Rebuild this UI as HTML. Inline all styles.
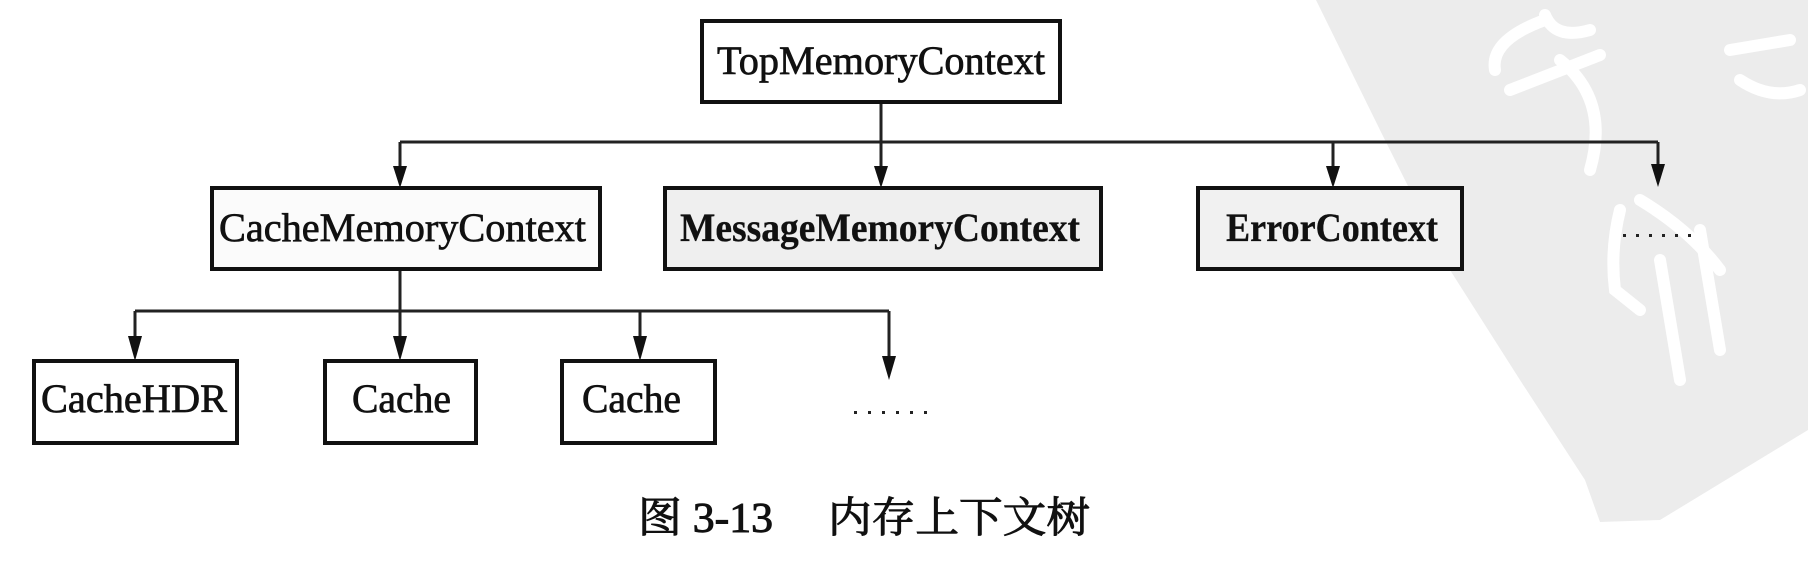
<!DOCTYPE html>
<html><head><meta charset="utf-8"><style>
html,body{margin:0;padding:0;background:#fff;}
svg{display:block;}
.t{font-family:"Liberation Serif",serif;font-size:40px;fill:#111;stroke:#111;stroke-width:0.7;}
.b{font-weight:bold;stroke-width:0.3;}
.cap{font-family:"Liberation Serif","Noto Serif CJK SC",serif;font-size:42px;fill:#111;stroke:#111;stroke-width:1;}
</style></head><body>
<svg width="1808" height="573" viewBox="0 0 1808 573" xmlns="http://www.w3.org/2000/svg">
<polygon points="1316,0 1808,0 1808,430 1660,520 1600,522 1585,480 1520,380 1450,270 1380,130" fill="#ececec"/>
<g fill="none" stroke="#fff" stroke-width="12" stroke-linecap="round">
<path d="M1545,20 Q1490,40 1495,70"/>
<path d="M1545,15 Q1555,40 1590,30"/>
<path d="M1600,55 L1510,90"/>
<path d="M1560,60 Q1610,100 1590,170"/>
<path d="M1620,210 Q1610,250 1615,290 L1640,310"/>
<path d="M1640,200 Q1690,230 1720,270"/>
<path d="M1660,260 L1680,380"/>
<path d="M1700,230 L1720,350"/>
<path d="M1730,50 L1790,40"/>
<path d="M1740,80 Q1770,100 1800,90"/>
</g>
<g stroke="#222" stroke-width="3" fill="none">
<line x1="881" y1="101" x2="881" y2="172"/>
<line x1="400" y1="142" x2="1658" y2="142"/>
<line x1="400" y1="142" x2="400" y2="172"/>
<line x1="1333" y1="142" x2="1333" y2="172"/>
<line x1="1658" y1="142" x2="1658" y2="170"/>
<line x1="400" y1="270" x2="400" y2="340"/>
<line x1="135" y1="311" x2="889" y2="311"/>
<line x1="135" y1="311" x2="135" y2="340"/>
<line x1="640" y1="311" x2="640" y2="340"/>
<line x1="889" y1="311" x2="889" y2="362"/>
</g>
<g fill="#111">
<polygon points="393,166 407,166 400,188"/>
<polygon points="874,166 888,166 881,188"/>
<polygon points="1326,166 1340,166 1333,188"/>
<polygon points="1651,164 1665,164 1658,187"/>
<polygon points="128,336 142,336 135,361"/>
<polygon points="393,336 407,336 400,361"/>
<polygon points="633,336 647,336 640,361"/>
<polygon points="882,356 896,356 889,380"/>
</g>
<g stroke="#111" stroke-width="4">
<rect x="702" y="21" width="358" height="81" fill="#fff"/>
<rect x="212" y="188" width="388" height="81" fill="#fbfbfb"/>
<rect x="665" y="188" width="436" height="81" fill="#efefef"/>
<rect x="1198" y="188" width="264" height="81" fill="#f1f1f1"/>
<rect x="34" y="361" width="203" height="82" fill="#fff"/>
<rect x="325" y="361" width="151" height="82" fill="#fff"/>
<rect x="562" y="361" width="153" height="82" fill="#fff"/>
</g>
<text class="t" x="717" y="74" textLength="328" lengthAdjust="spacingAndGlyphs">TopMemoryContext</text>
<text class="t" x="219" y="241" textLength="367" lengthAdjust="spacingAndGlyphs">CacheMemoryContext</text>
<text class="t b" x="680" y="241" textLength="400" lengthAdjust="spacingAndGlyphs">MessageMemoryContext</text>
<text class="t b" x="1226" y="241" textLength="212" lengthAdjust="spacingAndGlyphs">ErrorContext</text>
<text class="t" x="41" y="412" textLength="186" lengthAdjust="spacingAndGlyphs">CacheHDR</text>
<text class="t" x="352" y="412" textLength="99" lengthAdjust="spacingAndGlyphs">Cache</text>
<text class="t" x="582" y="412" textLength="99" lengthAdjust="spacingAndGlyphs">Cache</text>
<g fill="#222">
<rect x="1623" y="234" width="3" height="3"/><rect x="1636" y="234" width="3" height="3"/><rect x="1649" y="234" width="3" height="3"/><rect x="1662" y="234" width="3" height="3"/><rect x="1675" y="234" width="3" height="3"/><rect x="1688" y="234" width="3" height="3"/>
<rect x="854" y="411" width="3" height="3"/><rect x="868" y="411" width="3" height="3"/><rect x="882" y="411" width="3" height="3"/><rect x="896" y="411" width="3" height="3"/><rect x="910" y="411" width="3" height="3"/><rect x="924" y="411" width="3" height="3"/>
</g>
<text class="cap" x="638" y="532" textLength="135" lengthAdjust="spacingAndGlyphs">图 3-13</text>
<text class="cap" x="828" y="532" textLength="262" lengthAdjust="spacingAndGlyphs">内存上下文树</text>
</svg>
</body></html>
